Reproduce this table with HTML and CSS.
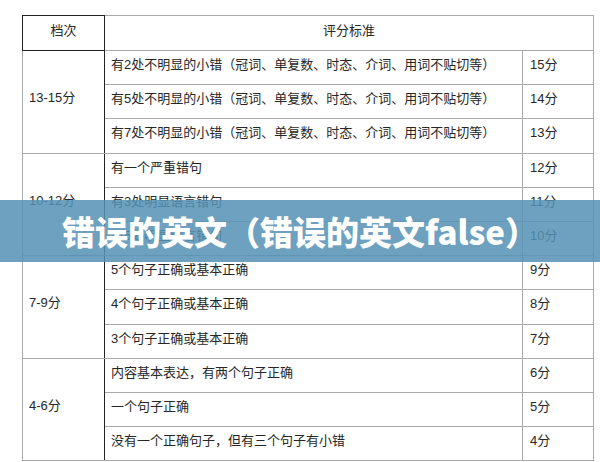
FILE: index.html
```html
<!DOCTYPE html>
<html lang="zh-CN">
<head>
<meta charset="utf-8">
<title>错误的英文</title>
<link rel="stylesheet" href="styles.css">
</head>
<body>
<div class="page">
  <table class="grid">
    <colgroup><col class="c1"><col class="c2"><col class="c3"></colgroup>
    <tr class="head"><th class="lvl-head">档次</th><th colspan="2" class="crit-head">评分标准</th></tr>
    <tr><td rowspan="3" class="lvl">13-15分</td><td class="desc">有2处不明显的小错（冠词、单复数、时态、介词、用词不贴切等）</td><td class="score">15分</td></tr>
    <tr><td class="desc">有5处不明显的小错（冠词、单复数、时态、介词、用词不贴切等）</td><td class="score">14分</td></tr>
    <tr><td class="desc">有7处不明显的小错（冠词、单复数、时态、介词、用词不贴切等）</td><td class="score">13分</td></tr>
    <tr><td rowspan="3" class="lvl">10-12分</td><td class="desc">有一个严重错句</td><td class="score">12分</td></tr>
    <tr><td class="desc">有3处明显语言错句</td><td class="score">11分</td></tr>
    <tr><td class="desc">有5处明显语言错句</td><td class="score">10分</td></tr>
    <tr><td rowspan="3" class="lvl">7-9分</td><td class="desc">5个句子正确或基本正确</td><td class="score">9分</td></tr>
    <tr><td class="desc">4个句子正确或基本正确</td><td class="score">8分</td></tr>
    <tr><td class="desc">3个句子正确或基本正确</td><td class="score">7分</td></tr>
    <tr><td rowspan="3" class="lvl">4-6分</td><td class="desc">内容基本表达，有两个句子正确</td><td class="score">6分</td></tr>
    <tr><td class="desc">一个句子正确</td><td class="score">5分</td></tr>
    <tr><td class="desc">没有一个正确句子，但有三个句子有小错</td><td class="score">4分</td></tr>
  </table>
  <div class="banner">错误的英文（错误的英文false）</div>
</div>
</body>
</html>
```

FILE: styles.css
```css
html, body {
  margin: 0;
  background: #fff;
}
body {
  font-family: "Liberation Sans", "Noto Sans CJK SC", sans-serif;
  color: #262626;
}
.page {
  position: relative;
  width: 600px;
  height: 462px;
  overflow: hidden;
  padding: 15px 0 0 22px;
  box-sizing: border-box;
}
.grid {
  border-collapse: collapse;
  table-layout: fixed;
  width: 571px;
  font-size: 13px;
}
.c1 { width: 82px; }
.c2 { width: 418px; }
.c3 { width: 71px; }
.grid td, .grid th {
  border: 1px solid #a9a9a9;
  padding: 6px 0 0 6px;
  font-weight: normal;
  text-align: left;
  vertical-align: top;
  line-height: 15px;
  white-space: nowrap;
}
.grid tr { height: 34.2px; }
.grid tr.head { height: 35px; }
.grid .lvl-head {
  text-align: center;
  border-color: #222;
  padding: 7px 0 0 0;
}
.grid .crit-head {
  text-align: center;
  padding: 7px 0 0 0;
}
.grid .lvl {
  vertical-align: middle;
  padding: 0 0 8px 6px;
  border-right-color: #222;
}
.grid .score {
  padding-left: 7px;
}
.banner {
  position: absolute;
  left: 0;
  top: 200px;
  width: 600px;
  height: 62px;
  background: rgba(85, 145, 180, 0.86);
  color: #fff;
  font-family: "Noto Sans CJK SC", sans-serif;
  font-weight: 900;
  font-size: 33px;
  display: flex;
  align-items: center;
  justify-content: center;
}
```
